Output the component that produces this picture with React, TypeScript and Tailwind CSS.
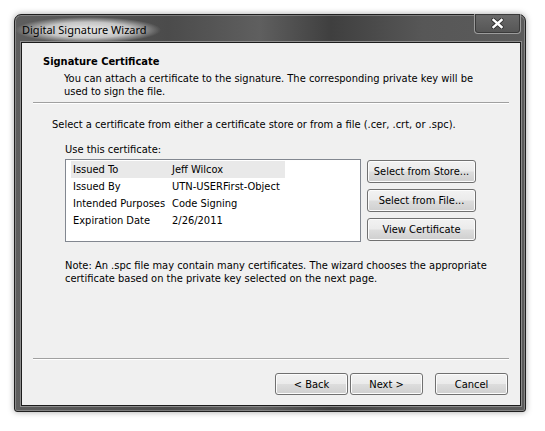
import React from 'react';

const body = {
  fontFamily: '"DejaVu Sans Condensed", "DejaVu Sans", sans-serif',
};

function WinButton({ children, className = '' }: { children: React.ReactNode; className?: string }) {
  return (
    <button
      className={`flex items-center justify-center rounded-[3px] border border-[#707070] bg-[linear-gradient(to_bottom,#f2f2f2_0%,#ebebeb_48%,#dddddd_52%,#cfcfcf_100%)] shadow-[inset_0_0_0_1px_#fcfcfc] text-[11px] leading-[13px] text-black ${className}`}
    >
      {children}
    </button>
  );
}

const rows = [
  ['Issued To', 'Jeff Wilcox'],
  ['Issued By', 'UTN-USERFirst-Object'],
  ['Intended Purposes', 'Code Signing'],
  ['Expiration Date', '2/26/2011'],
];

export default function App() {
  return (
    <div className="w-[545px] h-[431px] bg-white pt-[14px] pl-[14px]" style={body}>
      <div className="w-[512px] h-[398px] flex flex-col rounded-t-[7px] rounded-b-[3px] border border-[#1f1f1f] bg-[linear-gradient(to_right,#5e5e5e_0%,#4b4b4b_30%,#5f5f5f_48%,#3f3f3f_62%,#575757_80%,#5b5b5b_100%)] shadow-[0_0_6px_rgba(0,0,0,0.35),inset_0_0_0_1px_rgba(255,255,255,0.25)]">
        {/* title bar */}
        <div className="h-[27px] flex items-start">
          <span
            className="mt-[2px] pl-[7px] pr-[14px] py-[5px] text-[11px] leading-[16px] text-black bg-[radial-gradient(ellipse_closest-side,rgba(235,235,235,1)_0%,rgba(215,215,215,0.85)_60%,rgba(160,160,160,0)_100%)]"
            style={{ fontFamily: '"Noto Sans", "Open Sans", sans-serif' }}
          >
            Digital Signature Wizard
          </span>
          <div className="ml-auto mr-[4px] -mt-px w-[47px] h-[20px] flex items-center justify-center rounded-b-[4px] border border-t-0 border-[#9c9c9c] shadow-[inset_0_0_0_1px_#3a3a3a] bg-[linear-gradient(to_bottom,#6a6a6a,#555555)]">
            <svg width="13" height="11" viewBox="0 0 13 11">
              <path d="M2.5 2 L10.5 9 M10.5 2 L2.5 9" stroke="#2a2a2a" strokeWidth="4.2" strokeLinecap="round" />
              <path d="M2.5 2 L10.5 9 M10.5 2 L2.5 9" stroke="#ffffff" strokeWidth="2.4" strokeLinecap="square" />
            </svg>
          </div>
        </div>

        {/* client */}
        <div className="ml-[6px] mr-[4px] mb-[5px] flex-1 border border-[#1c1c1c] ring-1 ring-[#8d8d8d] bg-[#f0f0f0] text-[11px] leading-[13px] text-black flex flex-col">
          <div className="pt-[12px] pl-[21px] font-bold">Signature Certificate</div>
          <div className="mt-[4px] pl-[42px] pr-[20px]">
            You can attach a certificate to the signature. The corresponding private key will be
            <br />
            used to sign the file.
          </div>
          <div className="mt-[4px] ml-[11px] w-[476px] h-[2px] border-t border-[#a0a0a0] border-b border-b-white" />

          <div className="mt-[14px] pl-[30px]">
            Select a certificate from either a certificate store or from a file (.cer, .crt, or .spc).
          </div>
          <div className="mt-[12px] pl-[43px]">Use this certificate:</div>

          <div className="mt-[3px] pl-[43px] flex">
            <div className="w-[296px] h-[83px] border border-[#828790] bg-white pt-px pl-[5px]">
              {rows.map(([k, v], i) => (
                <div
                  key={k}
                  className={`w-[214px] h-[17px] flex items-center ${i === 0 ? 'bg-[#e9e9e9]' : ''}`}
                >
                  <span className="w-[99px] pl-[2px]">{k}</span>
                  <span className="pl-[2px]">{v}</span>
                </div>
              ))}
            </div>
            <div className="ml-[6px] mt-px flex flex-col gap-[6px]">
              <WinButton className="w-[109px] h-[23px]">Select from Store...</WinButton>
              <WinButton className="w-[109px] h-[23px]">Select from File...</WinButton>
              <WinButton className="w-[109px] h-[23px]">View Certificate</WinButton>
            </div>
          </div>

          <div className="mt-[17px] pl-[43px]">
            Note: An .spc file may contain many certificates. The wizard chooses the appropriate
            <br />
            certificate based on the private key selected on the next page.
          </div>

          <div className="mt-auto ml-[11px] w-[476px] h-[2px] border-t border-[#a0a0a0] border-b border-b-white" />
          <div className="mt-[13px] mb-[10px] pl-[253px] flex">
            <WinButton className="w-[73px] h-[22px]">&lt; Back</WinButton>
            <WinButton className="ml-[2px] w-[73px] h-[22px]">Next &gt;</WinButton>
            <WinButton className="ml-[12px] w-[73px] h-[22px]">Cancel</WinButton>
          </div>
        </div>
      </div>
    </div>
  );
}
